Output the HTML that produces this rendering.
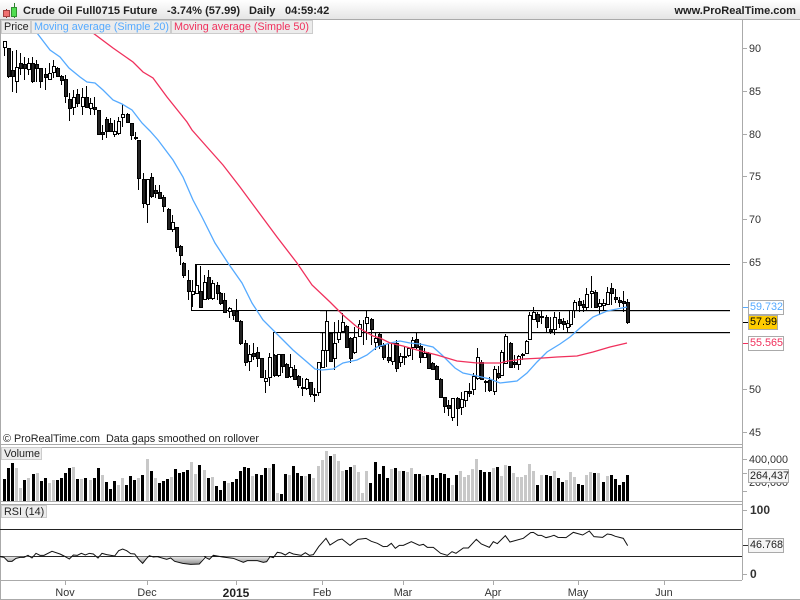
<!DOCTYPE html>
<html><head><meta charset="utf-8"><style>
html,body{margin:0;padding:0;background:#fff}
#p{position:relative;width:800px;height:600px;overflow:hidden;background:#fff;font-family:"Liberation Sans",Arial,sans-serif;font-size:10.8px;color:#222}
#p div{position:absolute;white-space:nowrap;line-height:14px}
.b{font-weight:bold}
.h{top:4px;font-weight:bold;font-size:11.05px}
.l{background:#ececec;border:1px solid #ccc;box-sizing:border-box;height:14px;line-height:12px!important;padding-left:2px;font-size:10.8px}
.a{left:749px;color:#333;font-size:10.8px}
.v{box-sizing:border-box;border:1px solid #aaa;background:#f5f5f5;height:15px;line-height:13px!important;padding-left:1px;font-size:10.8px}
.t{color:#333;font-size:10.8px;top:586px;width:40px;text-align:center}
svg{position:absolute;left:0;top:0}
</style></head><body><div id="p">
<svg width="800" height="600" viewBox="0 0 800 600">
<defs><linearGradient id="h" x1="0" y1="0" x2="0" y2="1"><stop offset="0" stop-color="#fff"/><stop offset="1" stop-color="#e4e4e4"/></linearGradient>
<linearGradient id="r" x1="0" y1="0" x2="0" y2="1"><stop offset="0" stop-color="#e8e8e8"/><stop offset="1" stop-color="#8f8f8f"/></linearGradient></defs>
<rect width="800" height="20" fill="url(#h)"/>
<path d="M0 19.5H800M.5 20V599M742.5 20V580M0 444.5H742M0 447.5H742M0 501.5H742M0 504.5H742M0 580.5H742M0 599.5H800M65.5 580v5M147.5 580v5M236.5 580v5M322.5 580v5M403.5 580v5M493.5 580v5M578.5 580v5M664.5 580v5M743 48.5h4M743 91.5h4M743 134.5h4M743 176.5h4M743 219.5h4M743 262.5h4M743 389.5h4M743 432.5h4M743 459.5h4M743 473.5h4M743 491.5h4M743 510.5h4M743 574.5h4" stroke="#aaa" fill="none"/>
<path d="M743 545.5h5" stroke="#333"/>
<!-- icon -->
<path d="M6.5 9V18" stroke="#8a3030"/><rect x="3.5" y="10.5" width="6" height="6" fill="#f07070" stroke="#a04040"/>
<path d="M14.5 3V18" stroke="#308030"/><rect x="11.5" y="7.5" width="5" height="9" fill="#50dd50" stroke="#309030"/>
<!-- levels -->
<path d="M320 311.5H730M320 333.5H730" stroke="#ccc" fill="none"/>
<path d="M195.5 290V264.5H730M191.5 293V310.5H730M273.5 355V332.5H730" stroke="#000" fill="none"/>
<!-- wicks -->
<path stroke="#000" fill="none" d="M4.5 41V56M8.5 48V78M12.5 51V92M16.5 50V93M20.5 53V75M24.5 57V80M28.5 58V75M32.5 57V83M36.5 60V82M40.5 68V88M45.5 68V90M49.5 63V80M53.5 60V78M57.5 67V77M61.5 75V85M65.5 75V103M69.5 93V121M73.5 90V115M77.5 89V107M82.5 88V115M86.5 86V108M90.5 98V115M94.5 97V115M98.5 110V135M102.5 125V140M106.5 117V138M110.5 118V132M114.5 120V137M118.5 117V135M122.5 104V127M127.5 113V123M131.5 123V140M135.5 132V140M138.5 140V190M143.5 173V208M147.5 179V223M151.5 173V198M155.5 185V198M159.5 185V198M163.5 195V212M168.5 208V230M172.5 215V232M176.5 227V252M180.5 245V265M183.5 262V278M188.5 270V300M192.5 280V307M196.5 265V293M200.5 266V307M204.5 275V300M208.5 270V300M212.5 280V300M217.5 282V300M220.5 292V305M224.5 293V313M229.5 307V318M233.5 310V320M236.5 299V322M240.5 320V345M245.5 340V366M249.5 345V371M253.5 343V360M257.5 347V367M261.5 358V377M265.5 370V393M269.5 353V386M274.5 354V377M278.5 354V377M282.5 354V373M286.5 363V378M290.5 354V378M294.5 365V379M298.5 375V388M302.5 378V396M306.5 378V390M310.5 382V397M314.5 388V402M318.5 362V396M322.5 333V368M326.5 310V367M330.5 332V362M334.5 322V370M338.5 320V343M342.5 313V333M346.5 325V348M350.5 337V363M354.5 327V354M359.5 320V337M363.5 320V345M366.5 311V340M371.5 318V345M375.5 333V350M379.5 333V349M383.5 343V360M388.5 343V363M392.5 343V365M396.5 340V372M400.5 353V367M404.5 347V365M408.5 347V357M412.5 337V360M416.5 332V349M420.5 343V363M424.5 348V358M428.5 352V368M432.5 362V370M436.5 365V380M440.5 378V398M444.5 397V413M448.5 400V416M452.5 398V421M457.5 397V426M461.5 392V415M465.5 391V407M469.5 383V397M473.5 373V395M477.5 348V380M481.5 360V380M485.5 380V392M489.5 377V392M494.5 366V395M498.5 366V379M501.5 350V375M505.5 334V363M510.5 342V368M514.5 355V368M518.5 355V370M522.5 353V360M526.5 340V354M529.5 312V340M533.5 307V320M537.5 312V328M541.5 310V324M546.5 315V333M550.5 317V334M554.5 312V335M559.5 312V328M563.5 318V330M567.5 320V332M570.5 310V327M574.5 300V318M579.5 298V312M583.5 300V312M586.5 288V310M591.5 276V308M595.5 290V308M599.5 299V315M603.5 299V310M607.5 287V305M611.5 283V305M615.5 289V303M619.5 297V307M623.5 291V312M627.5 299V324"/>
<!-- black bodies -->
<path transform="translate(.5,.5)" stroke="#000" fill="#222" d="M7 48h3V76h-3zM11 70h3V76h-3zM19 63h3V68h-3zM23 64h3V68h-3zM31 63h3V81h-3zM35 64h3V68h-3zM39 68h3V81h-3zM44 74h3V77h-3zM56 68h3V76h-3zM60 76h3V80h-3zM64 79h3V96h-3zM68 99h3V108h-3zM76 94h3V103h-3zM85 97h3V107h-3zM93 107h3V109h-3zM97 110h3V134h-3zM101 132h3V134h-3zM105 119h3V131h-3zM109 123h3V131h-3zM126 114h3V122h-3zM130 123h3V135h-3zM134 137h3V138h-3zM137 140h3V178h-3zM142 179h3V203h-3zM150 177h3V196h-3zM154 190h3V193h-3zM158 192h3V198h-3zM162 197h3V206h-3zM167 209h3V229h-3zM175 227h3V247h-3zM179 246h3V255h-3zM182 263h3V275h-3zM187 280h3V291h-3zM199 291h3V307h-3zM207 277h3V298h-3zM216 285h3V293h-3zM219 293h3V303h-3zM223 300h3V312h-3zM232 310h3V315h-3zM235 311h3V321h-3zM239 321h3V343h-3zM244 343h3V362h-3zM252 353h3V356h-3zM256 352h3V358h-3zM260 358h3V377h-3zM273 355h3V375h-3zM281 354h3V366h-3zM285 364h3V377h-3zM293 369h3V379h-3zM297 376h3V385h-3zM301 387h3V388h-3zM309 382h3V394h-3zM313 394h3V395h-3zM329 333h3V361h-3zM345 326h3V347h-3zM349 338h3V358h-3zM370 319h3V329h-3zM378 334h3V346h-3zM382 345h3V357h-3zM387 357h3V360h-3zM395 343h3V368h-3zM403 356h3V357h-3zM415 339h3V347h-3zM419 346h3V357h-3zM427 353h3V368h-3zM431 363h3V369h-3zM435 366h3V379h-3zM439 379h3V397h-3zM443 397h3V406h-3zM447 405h3V408h-3zM456 398h3V408h-3zM468 391h3V393h-3zM480 362h3V379h-3zM484 381h3V382h-3zM488 380h3V390h-3zM497 373h3V377h-3zM509 343h3V367h-3zM513 362h3V364h-3zM521 354h3V355h-3zM536 314h3V321h-3zM540 316h3V317h-3zM545 317h3V327h-3zM549 329h3V331h-3zM558 319h3V323h-3zM562 321h3V324h-3zM578 301h3V305h-3zM582 304h3V307h-3zM594 292h3V307h-3zM610 288h3V293h-3zM614 297h3V299h-3zM618 300h3V302h-3zM622 301h3V303h-3zM626 302h3V322h-3z"/>
<!-- white bodies -->
<path transform="translate(.5,.5)" stroke="#000" fill="#fff" d="M3 41h3V47h-3zM15 67h3V81h-3zM27 63h3V69h-3zM48 73h3V79h-3zM52 66h3V72h-3zM72 97h3V107h-3zM81 97h3V106h-3zM89 103h3V108h-3zM113 131h3V134h-3zM117 121h3V133h-3zM121 114h3V117h-3zM146 179h3V204h-3zM171 222h3V229h-3zM191 291h3V294h-3zM195 285h3V293h-3zM203 282h3V299h-3zM211 283h3V298h-3zM228 308h3V311h-3zM248 354h3V361h-3zM264 378h3V381h-3zM268 357h3V377h-3zM277 354h3V375h-3zM289 367h3V376h-3zM305 379h3V388h-3zM317 362h3V392h-3zM321 350h3V367h-3zM325 321h3V350h-3zM333 343h3V358h-3zM337 332h3V339h-3zM341 322h3V331h-3zM353 337h3V352h-3zM358 324h3V336h-3zM365 317h3V323h-3zM374 338h3V342h-3zM391 343h3V361h-3zM399 356h3V362h-3zM407 348h3V355h-3zM411 340h3V347h-3zM423 353h3V357h-3zM451 398h3V417h-3zM460 399h3V407h-3zM464 391h3V400h-3zM472 376h3V389h-3zM476 357h3V378h-3zM493 369h3V391h-3zM500 352h3V375h-3zM504 336h3V363h-3zM517 356h3V364h-3zM525 341h3V353h-3zM528 315h3V339h-3zM532 312h3V319h-3zM553 317h3V329h-3zM566 323h3V327h-3zM569 310h3V324h-3zM573 302h3V310h-3zM585 294h3V307h-3zM590 291h3V293h-3zM598 303h3V306h-3zM602 303h3V305h-3zM606 292h3V304h-3z"/>
<!-- MA20 -->
<polyline fill="none" stroke="#55aaff" stroke-width="1.3" points="30,20 37,33 50,50 60,57 69,68 80,77 87,82 95,83 103,90 113,100 122,104 132,110 142,123 150,131 158,140 173,160 183,177 193,200 202,217 215,243 228,263 242,283 252,303 263,320 280,337 293,350 307,362 315,369 322,370 333,369 343,363 357,360 367,355 377,347 390,343 400,341 410,343 420,344 433,347 442,355 455,368 463,373 477,376 490,379 500,383 517,381 527,373 537,362 547,352 560,344 570,337 580,328 593,317 607,311 627,307"/>
<!-- MA50 -->
<polyline fill="none" stroke="#f0305c" stroke-width="1.3" points="90,30 93,33 113,48 133,62 143,72 153,78 167,97 187,122 192,130 207,147 223,165 240,187 257,210 277,237 297,263 312,285 330,302 343,315 357,327 373,336 380,338 390,343 403,346 417,350 437,355 457,361 477,363 500,363 508,361 523,359 543,358 557,357 577,356 593,352 610,347 627,343"/>
<!-- RSI -->
<path d="M0 529.5H742" stroke="#222"/>
<path d="M0 556.5H742" stroke="#222"/>
<g transform="translate(0,430) scale(.33333)">
<path fill="url(#r)" d="M0 380L12 382 24 394 36 394 48 385 60 382 72 382 90 380 96 384 102 380H192L208 387 218 380H285L294 384 303 380H392L404 381 416 388 428 400 440 385 445 380H460L472 380 500 388 512 384 524 394 548 400 572 403 598 402 612 380H618L628 388 636 380H668L700 385 730 397 742 392 760 392 772 392 790 397 800 395 808 380z"/>
<polyline fill="none" stroke="#111" stroke-width="3" points="0,380 12,382 24,394 36,394 48,385 60,382 72,382 84,376 96,384 108,370 120,376 132,376 156,364 180,372 192,378 208,387 220,375 232,376 244,370 256,375 268,370 280,372 294,384 306,370 320,374 344,378 356,362 368,357 380,362 392,371 404,372 416,388 428,400 440,385 448,377 460,381 472,380 500,388 512,384 524,394 548,400 572,403 598,402 616,382 628,388 640,376 668,381 700,385 730,397 742,392 760,392 772,392 790,397 800,395 810,380 820,383 832,367 844,369 856,375 868,367 880,372 904,376 916,368 928,376 940,374 956,350 978,325 990,345 1014,330 1026,327 1050,346 1074,328 1098,325 1114,334 1132,340 1150,350 1162,349 1174,340 1186,355 1198,346 1210,346 1234,335 1258,346 1270,343 1282,352 1300,352 1322,370 1342,376 1356,365 1368,370 1390,354 1405,354 1429,328 1444,342 1468,352 1480,335 1492,341 1516,317 1530,336 1570,325 1592,308 1600,307 1614,316 1624,316 1638,323 1650,320 1662,316 1674,322 1698,323 1720,307 1748,315 1768,303 1782,320 1808,322 1822,312 1834,314 1846,319 1870,325 1883,347"/>
</g>
<!-- volume -->
<path stroke="#000" stroke-width="3" fill="none" d="M4.5 501V479M8.5 501V468M12.5 501V463M24.5 501V480M33.5 501V474M41.5 501V481M45.5 501V478M57.5 501V480M61.5 501V478M65.5 501V473M69.5 501V468M77.5 501V479M85.5 501V478M94.5 501V478M98.5 501V468M106.5 501V482M110.5 501V489M114.5 501V481M126.5 501V485M130.5 501V476M134.5 501V480M142.5 501V475M151.5 501V471M159.5 501V483M163.5 501V481M167.5 501V479M175.5 501V469M179.5 501V473M183.5 501V472M187.5 501V470M199.5 501V465M208.5 501V478M216.5 501V486M220.5 501V490M224.5 501V481M232.5 501V482M236.5 501V479M240.5 501V471M244.5 501V467M248.5 501V468M256.5 501V474M261.5 501V475M265.5 501V468M273.5 501V464M281.5 501V494M285.5 501V474M293.5 501V466M297.5 501V473M301.5 501V476M309.5 501V474M330.5 501V456M346.5 501V470M350.5 501V467M370.5 501V483M375.5 501V462M379.5 501V474M383.5 501V466M387.5 501V478M395.5 501V468M403.5 501V471M415.5 501V474M419.5 501V474M427.5 501V475M432.5 501V475M436.5 501V478M440.5 501V473M444.5 501V474M448.5 501V478M456.5 501V475M480.5 501V470M484.5 501V472M489.5 501V472M497.5 501V467M509.5 501V466M537.5 501V485M546.5 501V475M550.5 501V476M558.5 501V478M562.5 501V482M578.5 501V484M582.5 501V485M594.5 501V473M603.5 501V482M611.5 501V475M615.5 501V479M619.5 501V485M623.5 501V482M627.5 501V475"/>
<path stroke="#c8c8c8" stroke-width="3" fill="none" d="M16.5 501V468M20.5 501V488M28.5 501V478M37.5 501V473M49.5 501V483M53.5 501V480M73.5 501V467M81.5 501V479M90.5 501V480M102.5 501V475M118.5 501V485M122.5 501V478M138.5 501V478M147.5 501V459M155.5 501V478M171.5 501V477M191.5 501V462M195.5 501V474M204.5 501V470M212.5 501V477M228.5 501V483M252.5 501V476M269.5 501V468M277.5 501V493M289.5 501V475M305.5 501V476M313.5 501V478M318.5 501V466M322.5 501V460M326.5 501V451M334.5 501V454M338.5 501V461M342.5 501V471M354.5 501V465M358.5 501V472M362.5 501V493M366.5 501V471M391.5 501V469M399.5 501V471M407.5 501V472M411.5 501V468M423.5 501V476M452.5 501V485M460.5 501V471M464.5 501V477M468.5 501V475M472.5 501V469M476.5 501V459M493.5 501V468M501.5 501V476M505.5 501V465M513.5 501V473M517.5 501V477M521.5 501V477M525.5 501V475M529.5 501V464M533.5 501V471M541.5 501V475M554.5 501V471M566.5 501V480M570.5 501V472M574.5 501V477M586.5 501V475M590.5 501V472M598.5 501V473M607.5 501V476"/>
<!-- value ticks -->
<path d="M743 307.5h5" stroke="#55aaff"/><path d="M743 322.5h5" stroke="#000"/><path d="M743 343.5h5" stroke="#f0305c"/>
</svg>

<div class="h" style="left:23px">Crude Oil Full0715 Future</div>
<div class="h" style="left:167px">-3.74% (57.99)</div>
<div class="h" style="left:249px">Daily</div>
<div class="h" style="left:285px">04:59:42</div>
<div class="h" style="right:4px">www.ProRealTime.com</div>

<div class="l" style="left:1px;top:20px;width:30px">Price</div>
<div class="l" style="left:31px;top:20px;width:140px;color:#55aaff">Moving average (Simple 20)</div>
<div class="l" style="left:171px;top:20px;width:142px;color:#f0305c">Moving average (Simple 50)</div>
<div style="left:3px;top:432px;font-size:10.8px;color:#222">© ProRealTime.com&nbsp; Data gaps smoothed on rollover</div>
<div class="l" style="left:1px;top:447px;width:41px;height:13px">Volume</div>
<div class="l" style="left:1px;top:505px;width:46px;height:13px">RSI (14)</div>

<div class="a" style="top:42px">90</div>
<div class="a" style="top:85px">85</div>
<div class="a" style="top:128px">80</div>
<div class="a" style="top:170px">75</div>
<div class="a" style="top:213px">70</div>
<div class="a" style="top:256px">65</div>
<div class="a" style="top:383px">50</div>
<div class="a" style="top:426px">45</div>
<div class="a" style="top:453px">400,000</div>
<div class="a" style="top:476px">200,000</div>
<div class="a b" style="top:503px;left:750px;font-size:12px">100</div>
<div class="a b" style="top:567px;left:750px;font-size:12px">0</div>

<div class="v" style="left:748px;top:300px;width:36px;color:#55aaff;background:#fff">59.732</div>
<div class="v" style="left:748px;top:315px;width:30px;background:#ffcc00;color:#000">57.99</div>
<div class="v" style="left:748px;top:336px;width:36px;color:#f0305c;background:#fff">55.565</div>
<div class="v" style="left:748px;top:469px;width:41px;height:14px;line-height:12px!important">264,437</div>
<div class="v" style="left:748px;top:538px;width:36px">46.768</div>

<div class="t" style="left:45px">Nov</div>
<div class="t" style="left:127px">Dec</div>
<div class="t b" style="left:216px;font-size:12px;color:#222">2015</div>
<div class="t" style="left:302px">Feb</div>
<div class="t" style="left:383px">Mar</div>
<div class="t" style="left:473px">Apr</div>
<div class="t" style="left:558px">May</div>
<div class="t" style="left:644px">Jun</div>
</div></body></html>
